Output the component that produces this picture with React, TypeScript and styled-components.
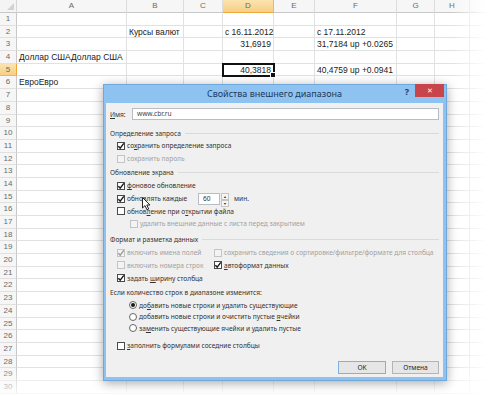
import React from 'react'
import styled, { createGlobalStyle } from 'styled-components'

const GlobalStyle = createGlobalStyle`
  html, body { margin: 0; padding: 0; background: #fff; }
  body { width: 499px; height: 396px; overflow: hidden; }
`

const columns = ['A', 'B', 'C', 'D', 'E', 'F', 'G', 'H', '']
const ROWS = 30
const selCol = 'D'
const selRow = 5

type CellData = { text: string; align?: 'left' | 'right' }
const cells: Record<string, CellData> = {
  B2: { text: 'Курсы валют' },
  D2: { text: 'с 16.11.2012' },
  F2: { text: 'с 17.11.2012' },
  D3: { text: '31,6919', align: 'right' },
  F3: { text: '31,7184 up +0.0265' },
  A4: { text: 'Доллар СШАДоллар США' },
  D5: { text: '40,3818', align: 'right' },
  F5: { text: '40,4759 up +0.0941' },
  A6: { text: 'ЕвроЕвро' },
}

export default function App() {
  const rows = Array.from({ length: ROWS }, (_, i) => i + 1)
  return (
    <>
      <GlobalStyle />
      <Page>
        <Grid>
          <Corner />
          {columns.map((c, i) => (
            <ColHead key={'h' + i} $selected={c === selCol}>{c}</ColHead>
          ))}
          {rows.map(r => (
            <React.Fragment key={r}>
              <RowHead $selected={r === selRow}>{r}</RowHead>
              {columns.map((c, i) => {
                const d = cells[c + r]
                return (
                  <Cell key={c + r + i} $align={d?.align} $selected={c === selCol && r === selRow}>
                    {d?.text}
                  </Cell>
                )
              })}
            </React.Fragment>
          ))}
        </Grid>
        <FadeRight />
        <FadeBottom />

        <Dialog>
          <TitleBar>
            <span />
            <Title>Свойства внешнего диапазона</Title>
            <TitleControls>
              <Help>?</Help>
              <Close>✕</Close>
            </TitleControls>
          </TitleBar>
          <Body>
            <NameRow>
              <Label><Acc>И</Acc>мя:</Label>
              <TextBox>www.cbr.ru</TextBox>
            </NameRow>

            <GroupTitle $top={6.5}>Определение запроса</GroupTitle>
            <Option $indent={7}><Check checked /><Text>со<Acc>х</Acc>ранить определение запроса</Text></Option>
            <Option $indent={7} $disabled><Check disabled /><Text>сохранить пароль</Text></Option>

            <GroupTitle $top={1.6}>Обновление экрана</GroupTitle>
            <Option $indent={7}><Check checked /><Text><Acc>ф</Acc>оновое обновление</Text></Option>
            <Option $indent={7}>
              <Check checked />
              <FixedLabel>обно<Acc>в</Acc>лять каждые</FixedLabel>
              <Spin>
                <SpinInput>60</SpinInput>
                <SpinButtons>
                  <SpinArrow>▲</SpinArrow>
                  <SpinArrow>▼</SpinArrow>
                </SpinButtons>
              </Spin>
              <Unit>мин.</Unit>
            </Option>
            <Option $indent={7}><Check /><Text>обнов<Acc>л</Acc>ение при о<Acc>т</Acc>крытии файла</Text></Option>
            <Option $indent={20} $disabled><Check disabled /><Text>удалить внешние данные с листа перед закрытием</Text></Option>

            <GroupTitle $top={3.2}>Формат и разметка данных</GroupTitle>
            <FormatGrid>
              <Option $disabled><Check checked disabled /><Text>включить имена полей</Text></Option>
              <Option $disabled><Check disabled /><Text>сохранить сведения о сортировке/фильтре/формате для столбца</Text></Option>
              <Option $disabled><Check disabled /><Text>включить номера строк</Text></Option>
              <Option><Check checked /><Text><Acc>а</Acc>втоформат данных</Text></Option>
              <Option><Check checked /><Text>задать <Acc>ш</Acc>ирину столбца</Text></Option>
            </FormatGrid>

            <Note>Если количество строк в диапазоне изменится:</Note>
            <RadioOption><Radio $on /><Text>до<Acc>б</Acc>авить новые строки и удалить существующие</Text></RadioOption>
            <RadioOption><Radio /><Text>добавить новые строки и очистить пустые <Acc>я</Acc>чейки</Text></RadioOption>
            <RadioOption><Radio /><Text>за<Acc>м</Acc>енить существующие ячейки и удалить пустые</Text></RadioOption>

            <Option $indent={7} $top={5.7}><Check /><Text><Acc>з</Acc>аполнить формулами соседние столбцы</Text></Option>

            <Footer>
              <Button $primary>OK</Button>
              <Button>Отмена</Button>
            </Footer>
          </Body>
        </Dialog>

        <Pointer width="9" height="14" viewBox="0 0 9 14">
          <path d="M0.5 0.5 L0.5 11 L3 8.6 L5 12.8 L6.7 12 L4.8 8 L8 8 Z" fill="#fff" stroke="#111" strokeWidth="0.9" strokeLinejoin="round" />
        </Pointer>
      </Page>
    </>
  )
}

function Check({ checked, disabled }: { checked?: boolean; disabled?: boolean }) {
  return (
    <Box $disabled={disabled}>
      {checked && (
        <svg width="8" height="8" viewBox="0 0 8 8">
          <path d="M1.3 4.2 L3.2 6.1 L6.8 1.4" fill="none" stroke={disabled ? '#9a9a9a' : '#1a1a1a'} strokeWidth="1.4" />
        </svg>
      )}
    </Box>
  )
}

const Page = styled.div`
  position: relative;
  width: 499px;
  height: 396px;
  overflow: hidden;
  background: #fff;
`

const Grid = styled.div`
  display: grid;
  grid-template-columns: 17px 110px 57px 39px 51px 41px 82px 38px 35px 1fr;
  grid-template-rows: 13px repeat(${ROWS}, 12.7px);
  font-family: "Liberation Sans", Arial, sans-serif;
`

const Corner = styled.div`
  background: #f4f4f4;
  border-right: 1px solid #d6d6d6;
  border-bottom: 1px solid #c8c8c8;
  position: relative;
  &::after {
    content: '';
    position: absolute;
    right: 2px;
    bottom: 2px;
    border-left: 7px solid transparent;
    border-bottom: 7px solid #d2d2d2;
  }
`

const ColHead = styled.div<{ $selected?: boolean }>`
  background: ${p => (p.$selected ? 'linear-gradient(#fbe3b0, #f6cf84)' : '#f6f6f6')};
  border-right: 1px solid ${p => (p.$selected ? '#e9b766' : '#dcdcdc')};
  border-bottom: 1px solid ${p => (p.$selected ? '#f0a63b' : '#c8c8c8')};
  color: #6a6a6a;
  font-size: 8px;
  line-height: 12px;
  text-align: center;
`

const RowHead = styled.div<{ $selected?: boolean }>`
  background: ${p => (p.$selected ? 'linear-gradient(#fbe3b0, #f6cf84)' : '#f6f6f6')};
  border-right: 1px solid ${p => (p.$selected ? '#f0a63b' : '#c8c8c8')};
  border-bottom: 1px solid ${p => (p.$selected ? '#e9b766' : '#e0e0e0')};
  color: #6a6a6a;
  font-size: 8px;
  line-height: 12px;
  text-align: center;
`

const Cell = styled.div<{ $align?: 'left' | 'right'; $selected?: boolean }>`
  position: relative;
  border-right: 1px solid #dfe1e2;
  border-bottom: 1px solid #dfe1e2;
  font-size: 8.5px;
  line-height: 12px;
  color: #222;
  padding: 0 2px;
  white-space: nowrap;
  text-align: ${p => p.$align ?? 'left'};
  overflow: visible;
  z-index: ${p => (p.$selected ? 2 : 1)};
  ${p =>
    p.$selected &&
    `
    outline: 2px solid #111;
    outline-offset: -1px;
    &::after {
      content: '';
      position: absolute;
      right: -3px;
      bottom: -3px;
      width: 4px;
      height: 4px;
      background: #111;
      border: 1px solid #fff;
    }
  `}
`

const FadeRight = styled.div`
  position: absolute;
  top: 0;
  right: 0;
  width: 48px;
  height: 100%;
  background: linear-gradient(to right, rgba(255, 255, 255, 0), #fff 75%);
  z-index: 2;
`

const FadeBottom = styled.div`
  position: absolute;
  left: 0;
  bottom: 0;
  width: 100%;
  height: 30px;
  background: linear-gradient(rgba(255, 255, 255, 0), rgba(255, 255, 255, 0.85));
  z-index: 2;
`

const Dialog = styled.div`
  position: absolute;
  left: 103px;
  top: 84px;
  width: 344px;
  height: 297px;
  box-sizing: border-box;
  background: #8ec3f1;
  border: 1px solid #70a8dc;
  box-shadow: 0 2px 10px rgba(0, 0, 0, 0.35);
  padding: 0 3px 3px 2px;
  display: flex;
  flex-direction: column;
  font-family: "Noto Sans", "Open Sans", sans-serif;
  z-index: 3;
`

const TitleBar = styled.div`
  height: 18px;
  display: grid;
  grid-template-columns: 1fr auto 1fr;
  align-items: start;
`

const Title = styled.div`
  font-size: 9px;
  line-height: 18px;
  color: #1d3a5a;
  white-space: nowrap;
`

const TitleControls = styled.div`
  display: flex;
  justify-content: flex-end;
  align-items: flex-start;
  margin-right: -1px;
`

const Help = styled.span`
  font-size: 9px;
  font-weight: bold;
  color: #1b3a66;
  line-height: 14px;
  margin-right: 6px;
`

const Close = styled.span`
  width: 29px;
  height: 13px;
  margin-top: -1px;
  background: #c8454b;
  color: #fff;
  font-size: 7px;
  line-height: 13px;
  text-align: center;
`

const Body = styled.div`
  flex: 1;
  background: #f0f0f0;
  padding: 5px 4px 3px 4px;
  display: flex;
  flex-direction: column;
  font-size: 6.6px;
  color: #333;
`

const Acc = styled.span`
  text-decoration: underline;
`

const Text = styled.span`
  white-space: nowrap;
`

const NameRow = styled.div`
  height: 12px;
  display: flex;
  align-items: center;
`

const Label = styled.span`
  width: 22px;
  color: #333;
`

const TextBox = styled.div`
  flex: 1;
  height: 12px;
  box-sizing: border-box;
  border: 1px solid #b8bcc4;
  background: #fff;
  padding-left: 4px;
  line-height: 10px;
  color: #444;
`

const GroupTitle = styled.div<{ $top: number }>`
  height: 13px;
  margin-top: ${p => p.$top}px;
  display: flex;
  align-items: center;
  gap: 4px;
  white-space: nowrap;
  color: #333;
  &::after {
    content: '';
    flex: 1;
    height: 1px;
    background: #dadada;
  }
`

const Option = styled.div<{ $indent?: number; $disabled?: boolean; $top?: number }>`
  height: 12.7px;
  display: flex;
  align-items: center;
  margin-left: ${p => p.$indent ?? 0}px;
  margin-top: ${p => p.$top ?? 0}px;
  color: ${p => (p.$disabled ? '#a2a2a2' : '#333')};
  white-space: nowrap;
`

const Box = styled.span<{ $disabled?: boolean }>`
  width: 8px;
  height: 8px;
  margin-right: 2px;
  box-sizing: border-box;
  border: 1px solid ${p => (p.$disabled ? '#c4c4c4' : '#4a4a4a')};
  background: ${p => (p.$disabled ? '#f3f3f3' : '#fff')};
  display: flex;
  align-items: center;
  justify-content: center;
  flex-shrink: 0;
  svg { margin: -1px; }
`

const FixedLabel = styled.span`
  width: 71px;
`

const Spin = styled.div`
  display: flex;
  height: 12px;
  gap: 1px;
`

const SpinInput = styled.div`
  width: 22px;
  height: 12px;
  box-sizing: border-box;
  border: 1px solid #b8bcc4;
  background: #fff;
  padding-left: 4px;
  line-height: 10px;
  color: #333;
`

const SpinButtons = styled.div`
  width: 8px;
  display: flex;
  flex-direction: column;
`

const SpinArrow = styled.span`
  flex: 1;
  box-sizing: border-box;
  border: 1px solid #c4c4c4;
  background: #f6f6f6;
  font-size: 3.5px;
  line-height: 5px;
  text-align: center;
  color: #222;
`

const Unit = styled.span`
  margin-left: 5px;
`

const FormatGrid = styled.div`
  display: grid;
  grid-template-columns: 97px 1fr;
  grid-auto-rows: 12.7px;
  margin-left: 7px;
  & > * { height: auto; }
`

const Note = styled.div`
  height: 12px;
  margin-top: 2.9px;
  line-height: 12px;
  color: #333;
  white-space: nowrap;
`

const RadioOption = styled.div`
  height: 11.5px;
  display: flex;
  align-items: center;
  margin-left: 19px;
  white-space: nowrap;
  color: #333;
`

const Radio = styled.span<{ $on?: boolean }>`
  width: 8px;
  height: 8px;
  margin-right: 2px;
  box-sizing: border-box;
  border-radius: 50%;
  border: 1px solid #666;
  background: #fff;
  display: flex;
  align-items: center;
  justify-content: center;
  &::after {
    content: '';
    width: 4px;
    height: 4px;
    border-radius: 50%;
    background: ${p => (p.$on ? '#1a1a1a' : 'transparent')};
  }
`

const Footer = styled.div`
  margin-top: auto;
  display: flex;
  justify-content: flex-end;
  gap: 6px;
`

const Button = styled.div<{ $primary?: boolean }>`
  width: ${p => (p.$primary ? 48 : 47)}px;
  height: 13px;
  box-sizing: border-box;
  border: 1px solid ${p => (p.$primary ? '#7fb2de' : '#b4b4b4')};
  background: #e6e6e6;
  text-align: center;
  line-height: 11px;
  color: #222;
`

const Pointer = styled.svg`
  position: absolute;
  left: 142px;
  top: 197px;
  z-index: 4;
`
